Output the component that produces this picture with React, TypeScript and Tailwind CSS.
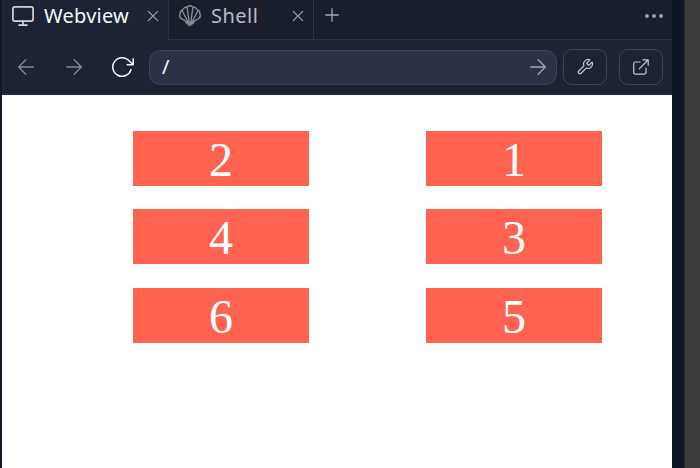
import React from "react";

type IconProps = {
  className: string;
  box: string;
  stroke?: number;
  children: React.ReactNode;
};

function Icon({ className, box, stroke = 1.5, children }: IconProps) {
  return (
    <svg
      className={`shrink-0 ${className}`}
      viewBox={box}
      fill="none"
      stroke="currentColor"
      strokeWidth={stroke}
      strokeLinecap="round"
      strokeLinejoin="round"
    >
      {children}
    </svg>
  );
}

function Close({ className }: { className: string }) {
  return (
    <Icon className={`h-3 w-3 text-[#a3a7ad] ${className}`} box="0 0 12 12" stroke={1.2}>
      <path d="M1.3 1.3 10.7 10.7M10.7 1.3 1.3 10.7" />
    </Icon>
  );
}

function Monitor() {
  return (
    <Icon className="mt-1.5 ml-2.5 h-5 w-[22px] text-[#d3d6da]" box="0 0 22 20" stroke={1.7}>
      <rect x="0.9" y="0.9" width="20.2" height="14.2" rx="2" />
      <path d="M11 15.5v3.4M7 19.1h8" />
    </Icon>
  );
}

function Shell() {
  return (
    <Icon className="mt-[5px] ml-2.5 h-[22px] w-[22px] text-[#868b92]" box="0 0 22 22" stroke={1.4}>
      <path d="M8.4 17.2 1.7 13.2C.6 12 .5 10.3 1.2 9 1 6.8 2 5 4.2 4.3 5 2.6 6.4 1.8 8.2 2.1 9.8.5 12.2.5 13.8 2.1c1.8-.3 3.2.5 4 2.2 2.2.7 3.2 2.5 3 4.7.7 1.3.6 3-.5 4.2l-6.7 4" />
      <path d="M10.2 17.5 8.1 2.4M11.8 17.5l2.1-15.1M9.2 17.5 3.2 5.8M12.8 17.5l6-11.7" />
      <path d="M6.5 17.5h9L11 21Z" fill="currentColor" strokeWidth="0.8" />
    </Icon>
  );
}

function Arrow({ className }: { className: string }) {
  return (
    <Icon className={`h-4 w-4 ${className}`} box="0 0 16 16" stroke={1.3}>
      <path d="M.7 8h14.6M8.2 .8 15.3 8l-7.1 7.2" />
    </Icon>
  );
}

function Card({ value }: { value: number }) {
  return <div className="h-[55px] bg-[#ff6350] text-center leading-[58px]">{value}</div>;
}

export default function App() {
  return (
    <div className="flex h-[468px] w-[700px] overflow-hidden bg-[#0e1525] font-['Noto_Sans',sans-serif]">
      <main className="ml-0.5 flex w-[670px] flex-col bg-white">
        <nav className="flex h-10 bg-[#181e2c] text-[20px] leading-8">
          <div className="flex w-[166px] bg-[#1d2332] text-[#f5f9fc]">
            <Monitor />
            <span className="ml-2.5 w-[85px] tracking-[0.25px] whitespace-nowrap">Webview</span>
            <Close className="mt-2.5 ml-[18px]" />
          </div>
          <div className="flex w-[146px] border-x border-b border-[#2b3245] text-[#b9bdc3]">
            <Shell />
            <span className="ml-2.5 w-12 tracking-[0.5px] whitespace-nowrap">Shell</span>
            <Close className="mt-2.5 ml-[33px]" />
          </div>
          <div className="flex flex-1 justify-between border-b border-[#2b3245] pr-[9px] pl-[11px] text-[#a3a7ad]">
            <Icon className="mt-2 h-[14px] w-[14px]" box="0 0 14 14" stroke={1.3}>
              <path d="M7 .7v12.6M.7 7h12.6" />
            </Icon>
            <Icon className="mt-3.5 h-1 w-[18px]" box="0 0 18 4">
              <g fill="currentColor" stroke="none">
                <circle cx="2" cy="2" r="1.9" />
                <circle cx="9" cy="2" r="1.9" />
                <circle cx="16" cy="2" r="1.9" />
              </g>
            </Icon>
          </div>
        </nav>
        <header className="flex h-[55px] items-center border-b border-[#292f43] bg-[#1d2332] pr-[9px] pl-4">
          <Arrow className="rotate-180 text-[#858a92]" />
          <Arrow className="ml-8 text-[#858a92]" />
          <Icon className="ml-[30px] h-[22px] w-[22px] text-[#f5f9fc]" box="0 0 22 22" stroke={1.5}>
            <path d="M21.2 2.8v6h-6M20.9 8.5 17.2 5A9.3 9.3 0 1 0 19 13.6" />
          </Icon>
          <div className="ml-[15px] flex h-[35px] w-[408px] items-center justify-between rounded-[11px] border border-[#3c445c] bg-[#2b3245] pr-2.5 pl-3 text-[20px] text-[#f5f9fc]">
            <span>/</span>
            <Arrow className="text-[#a3a7ad]" />
          </div>
          <div className="ml-1.5 flex h-9 w-11 items-center justify-center rounded-[9px] border border-[#3c445c] text-[#c2c8cc]">
            <Icon className="h-[18px] w-[18px]" box="0 0 24 24" stroke={1.6}>
              <path d="M14.7 6.3a1 1 0 0 0 0 1.4l1.6 1.6a1 1 0 0 0 1.4 0l3.8-3.8a6 6 0 0 1-7.9 7.9l-6.9 6.9a2.1 2.1 0 0 1-3-3l6.9-6.9a6 6 0 0 1 7.9-7.9Z" />
            </Icon>
          </div>
          <div className="ml-3 flex h-9 w-11 items-center justify-center rounded-[9px] border border-[#3c445c] text-[#c2c8cc]">
            <Icon className="h-4 w-4" box="0 0 16 16" stroke={1.2}>
              <path d="M9.8.8h5.4v5.4M15 1 6.2 9.8M7 3H2.5A1.8 1.8 0 0 0 .7 4.8v8.6a1.8 1.8 0 0 0 1.8 1.8h8.7a1.8 1.8 0 0 0 1.8-1.8V9" />
            </Icon>
          </div>
        </header>
        <section className="mt-9 ml-[131px] grid grid-cols-[176px_176px] grid-rows-[55px_56px_55px] gap-x-[117px] gap-y-[23px] font-['Liberation_Serif',serif] text-[48px] text-white">
          {[2, 1, 4, 3, 6, 5].map((value) => (
            <Card key={value} value={value} />
          ))}
        </section>
      </main>
      <aside className="ml-3 w-4 border-l border-[#252c38] bg-[#3c3c3c]" />
    </div>
  );
}
